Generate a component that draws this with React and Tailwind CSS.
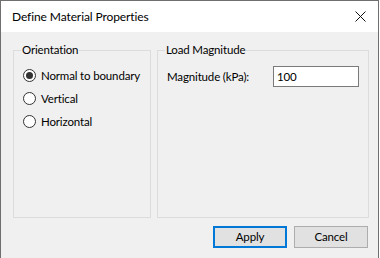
import React from "react";

function Radio({ label, checked }) {
  return (
    <label className="flex items-center h-[23px] gap-[5px] whitespace-nowrap">
      <span className="w-[13px] h-[13px] rounded-full border border-[#333333] bg-white flex items-center justify-center shrink-0">
        {checked && <span className="w-[7px] h-[7px] rounded-full bg-[#333333]" />}
      </span>
      <span>{label}</span>
    </label>
  );
}

export default function App() {
  return (
    <div
      className="w-[379px] h-[258px] border-l border-t border-r border-[#6f6f6f] bg-[#f0f0f0] flex flex-col text-[11.5px] tracking-[-0.15px] text-black"
      style={{ fontFamily: 'Lato, "Noto Sans", Arial, sans-serif' }}
    >
      <div className="h-[31px] bg-white flex items-center justify-between pl-[11px] pr-[11px] shrink-0">
        <span className="text-[12px] tracking-[-0.1px] leading-none pt-[1px] whitespace-nowrap">Define Material Properties</span>
        <svg width="11" height="11" viewBox="0 0 11 11" className="mr-[1px]">
          <path d="M0.5 0.5 L10.5 10.5 M10.5 0.5 L0.5 10.5" stroke="#111" strokeWidth="1" fill="none" />
        </svg>
      </div>
      <div className="flex gap-[6px] pl-[12px] pt-[10px]">
        <fieldset className="w-[138px] h-[176px] border border-[#dcdcdc] pl-[9px]">
          <legend className="px-[1px] ml-[-2px] leading-[16px] whitespace-nowrap">Orientation</legend>
          <div className="flex flex-col pt-[6px]">
            <Radio label="Normal to boundary" checked />
            <Radio label="Vertical" />
            <Radio label="Horizontal" />
          </div>
        </fieldset>
        <fieldset className="w-[212px] h-[176px] border border-[#dcdcdc] pl-[9px]">
          <legend className="px-[1px] ml-[-2px] leading-[16px] whitespace-nowrap">Load Magnitude</legend>
          <div className="flex items-center pt-[8px]">
            <span className="w-[106px] whitespace-nowrap">Magnitude (kPa):</span>
            <div className="w-[86px] h-[21px] border border-[#7a7a7a] bg-white flex items-center pl-[3px]">100</div>
          </div>
        </fieldset>
      </div>
      <div className="flex justify-end gap-[7px] pr-[10px] pt-[8px]">
        <button className="w-[74px] h-[22px] border-2 border-[#0078d7] bg-[#e1e1e1] leading-none">Apply</button>
        <button className="w-[74px] h-[22px] border border-[#adadad] bg-[#e1e1e1] leading-none">Cancel</button>
      </div>
    </div>
  );
}
